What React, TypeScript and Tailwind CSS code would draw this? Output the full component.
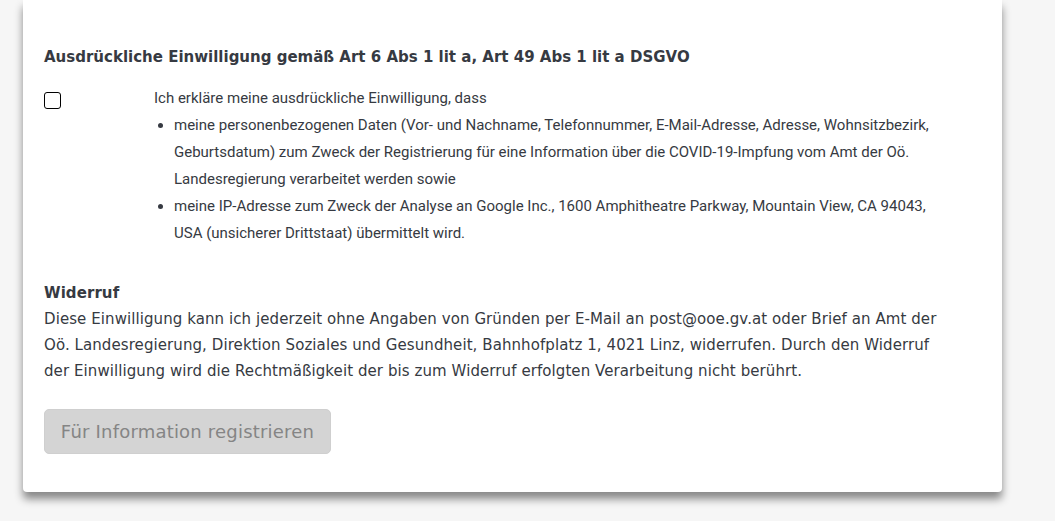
import React from "react";

export default function App() {
  const verdana = { fontFamily: '"DejaVu Sans", Verdana, sans-serif' };
  return (
    <div className="min-h-[521px] w-full bg-[#f6f6f6] overflow-hidden">
      <div className="ml-[23px] w-[979px] bg-white rounded-b-[4px] shadow-[0_7px_9px_rgba(0,0,0,0.45)] pt-[48px] pl-[21px] pr-[20px] pb-[38px] text-[#363a42]">
        <h2 className="text-[15px] font-bold leading-[18px]" style={verdana}>
          Ausdrückliche Einwilligung gemäß Art 6 Abs 1 lit a, Art 49 Abs 1 lit a DSGVO
        </h2>
        <div className="flex mt-[19px]" style={{ fontFamily: 'Roboto, "Liberation Sans", sans-serif' }}>
          <div className="w-[110px] shrink-0 pt-[7px]">
            <div className="w-[17px] h-[17px] border border-black rounded-[3px] bg-white" />
          </div>
          <div className="text-[15px] leading-[27px] w-[790px]">
            <p>Ich erkläre meine ausdrückliche Einwilligung, dass</p>
            <ul className="list-disc pl-[20px]">
              <li>
                meine personenbezogenen Daten (Vor- und Nachname, Telefonnummer, E-Mail-Adresse, Adresse, Wohnsitzbezirk, Geburtsdatum) zum Zweck der Registrierung für eine Information über die COVID-19-Impfung vom Amt der Oö. Landesregierung verarbeitet werden sowie
              </li>
              <li>
                meine IP-Adresse zum Zweck der Analyse an Google Inc., 1600 Amphitheatre Parkway, Mountain View, CA 94043, USA (unsicherer Drittstaat) übermittelt wird.
              </li>
            </ul>
          </div>
        </div>
        <div className="mt-[33px] w-[900px] text-[15px] leading-[26px] tracking-[0.08px]" style={verdana}>
          <h3 className="font-bold">Widerruf</h3>
          <p>
            Diese Einwilligung kann ich jederzeit ohne Angaben von Gründen per E-Mail an post@ooe.gv.at oder Brief an Amt der Oö. Landesregierung, Direktion Soziales und Gesundheit, Bahnhofplatz 1, 4021 Linz, widerrufen. Durch den Widerruf der Einwilligung wird die Rechtmäßigkeit der bis zum Widerruf erfolgten Verarbeitung nicht berührt.
          </p>
        </div>
        <button
          disabled
          className="mt-[25px] h-[45px] w-[287px] rounded-[5px] bg-[#d4d4d4] border border-[#cfcfcf] text-[#858585] text-[18px] tracking-[0.2px]"
          style={verdana}
        >
          Für Information registrieren
        </button>
      </div>
    </div>
  );
}
